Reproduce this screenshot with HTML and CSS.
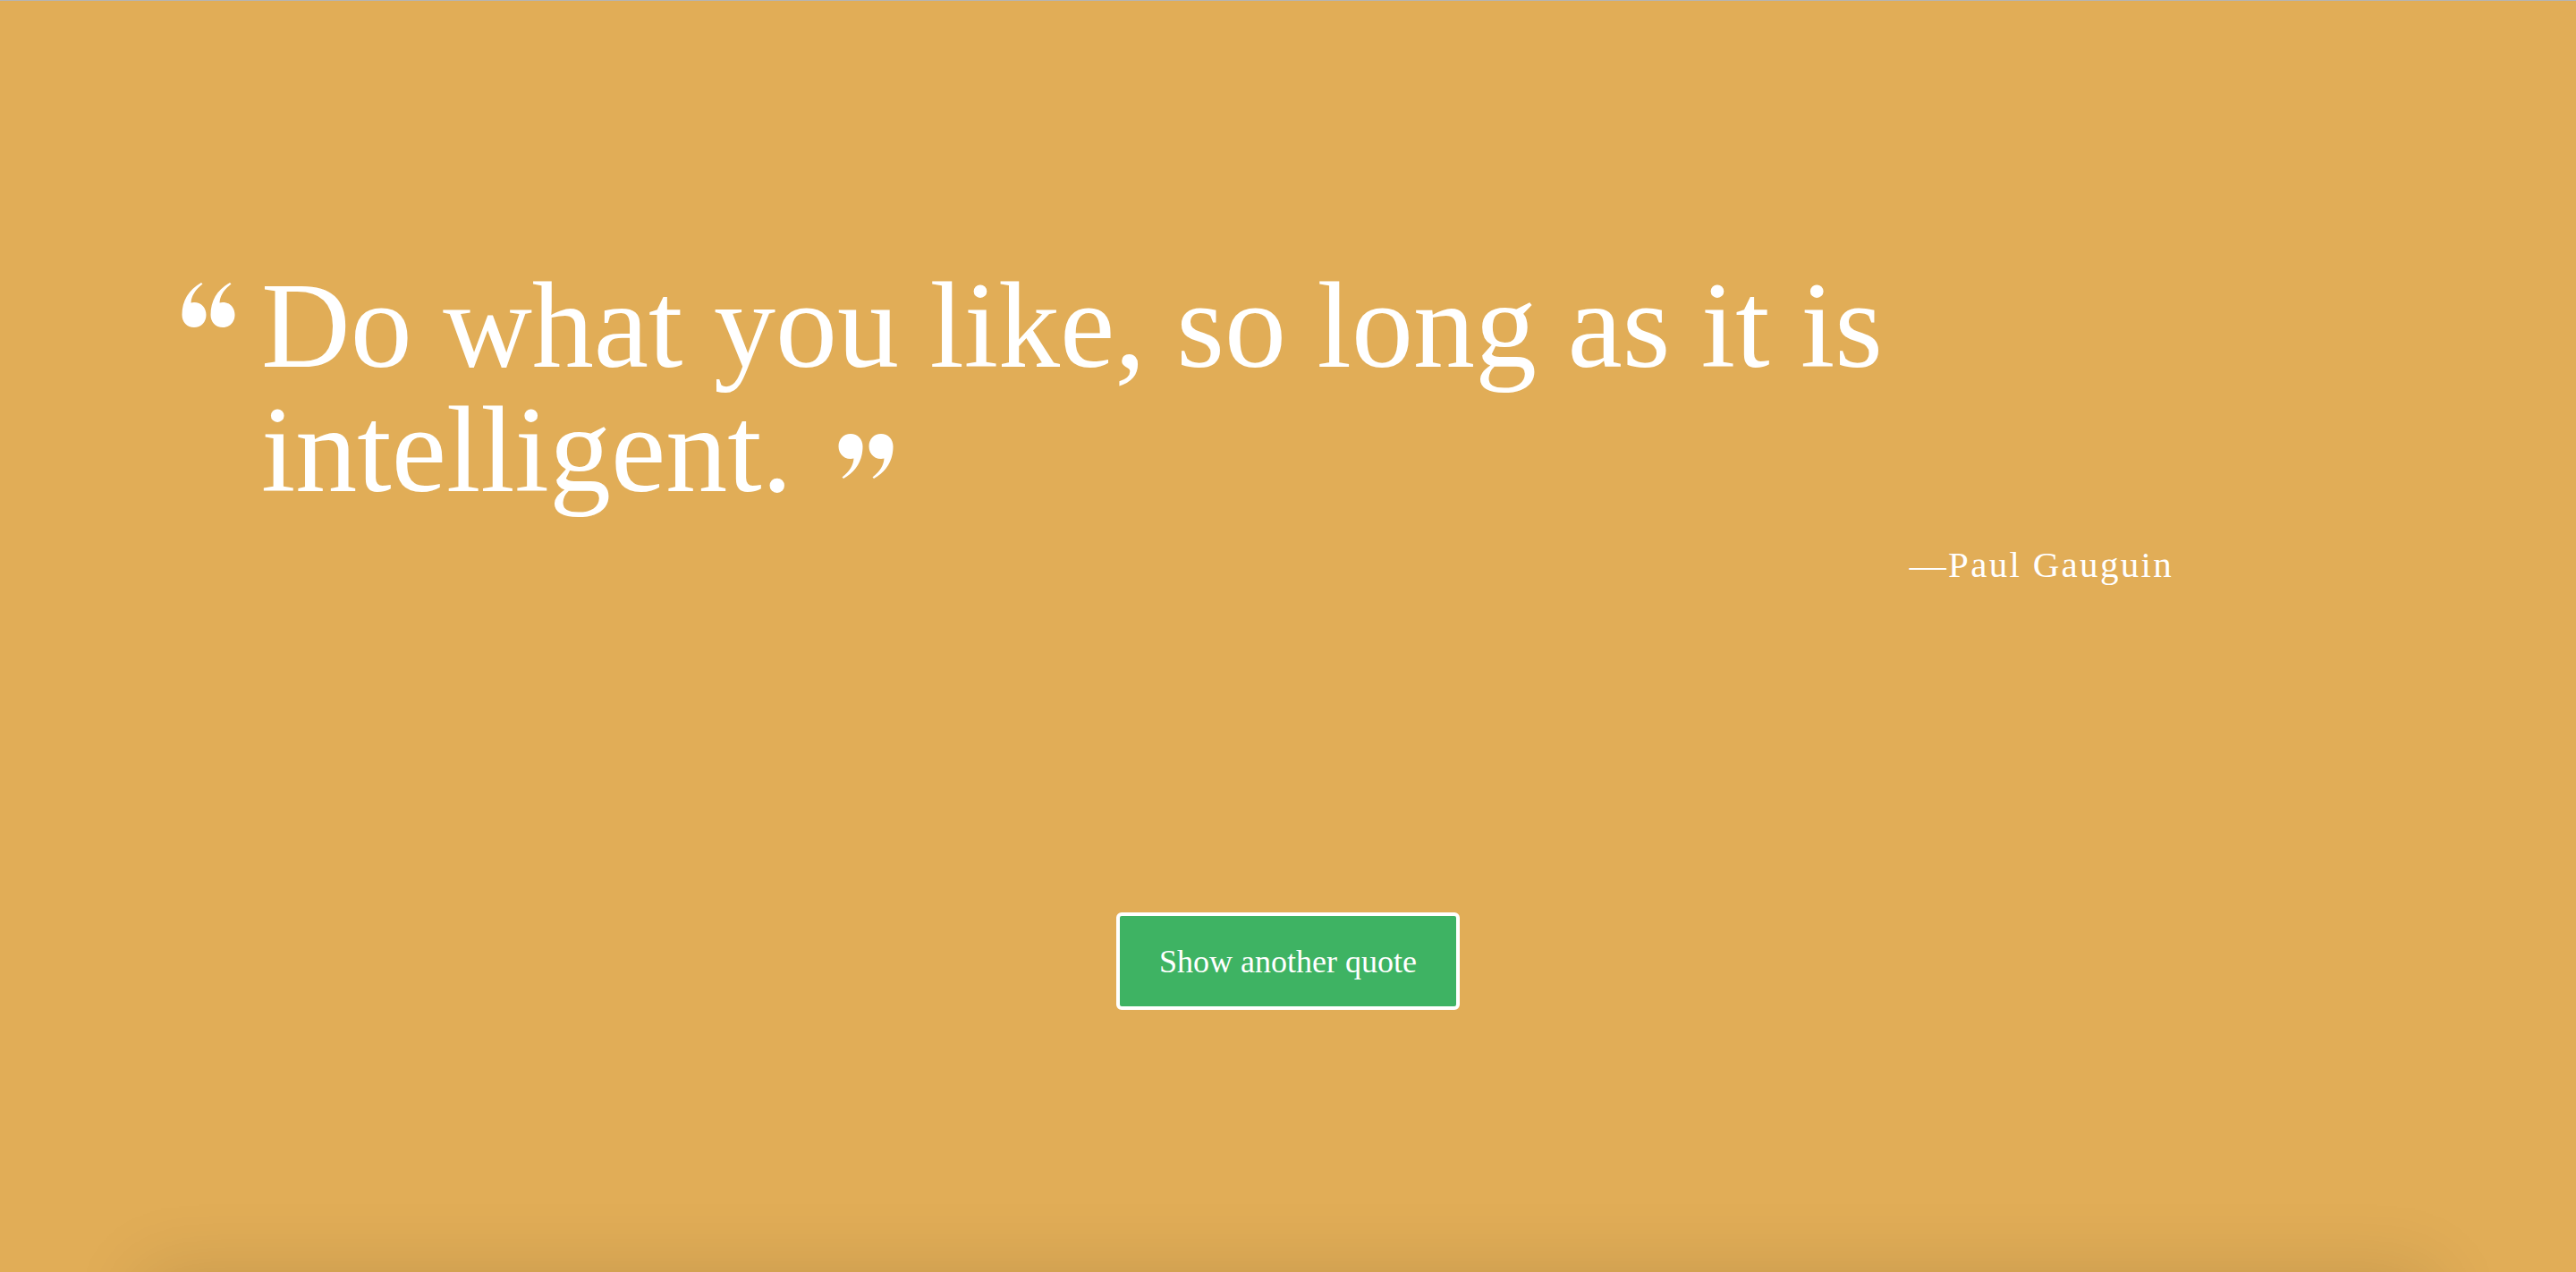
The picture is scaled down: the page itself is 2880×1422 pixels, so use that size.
FILE: index.html
```html
<!DOCTYPE html>
<html lang="en">
<head>
<meta charset="utf-8">
<title>Random Quote</title>
<link rel="stylesheet" href="styles.css">
</head>
<body>
<main class="hero">
  <section class="quote-box">
    <div class="quote-row">
      <svg class="qmark-open" viewBox="0 0 61 50" width="61" height="50" aria-hidden="true">
        <path d="M14 0 C22 0 27.5 6 27.5 14 C27.5 30 20 42 6 50 L4.5 48.5 C13 42 17 35 17.5 27.5 C16.5 27.8 15.5 28 14 28 C6 28 0.5 22 0.5 14 C0.5 6 6 0 14 0 Z" transform="rotate(180 14 25)"/>
        <path d="M14 0 C22 0 27.5 6 27.5 14 C27.5 30 20 42 6 50 L4.5 48.5 C13 42 17 35 17.5 27.5 C16.5 27.8 15.5 28 14 28 C6 28 0.5 22 0.5 14 C0.5 6 6 0 14 0 Z" transform="translate(32 0) rotate(180 14 25)"/>
      </svg>
      <p class="quote-text">Do what you like, so long as it is intelligent.&nbsp;<svg class="qmark-close" viewBox="0 0 62 50" width="62" height="50" aria-hidden="true"><path d="M14 0 C22 0 27.5 6 27.5 14 C27.5 30 20 42 6 50 L4.5 48.5 C13 42 17 35 17.5 27.5 C16.5 27.8 15.5 28 14 28 C6 28 0.5 22 0.5 14 C0.5 6 6 0 14 0 Z"/><path d="M14 0 C22 0 27.5 6 27.5 14 C27.5 30 20 42 6 50 L4.5 48.5 C13 42 17 35 17.5 27.5 C16.5 27.8 15.5 28 14 28 C6 28 0.5 22 0.5 14 C0.5 6 6 0 14 0 Z" transform="translate(34 0)"/></svg></p>
    </div>
    <p class="author">—Paul Gauguin</p>
  </section>
  <div class="actions">
    <button class="btn" type="button">Show another quote</button>
  </div>
</main>
<div class="card"></div>
</body>
</html>
```
FILE: styles.css
```css
html, body {
  margin: 0;
  padding: 0;
}

body {
  background: #e1ad57;
  font-family: "Liberation Serif", "Times New Roman", serif;
  color: #ffffff;
  overflow-x: hidden;
}

.hero {
  box-sizing: border-box;
  height: 1422px;
  border-top: 1px solid #b4b4b4;
  padding-top: 293px;
}

.quote-box {
  padding: 0 450px 0 203px;
}

.quote-row {
  display: flex;
  align-items: flex-start;
  gap: 28px;
}

.qmark-open {
  flex: none;
  fill: #ffffff;
  margin-top: 22px;
}

.quote-text {
  flex: 1;
  margin: 0;
  font-size: 138px;
  line-height: 139px;
}

.qmark-close {
  fill: #ffffff;
  vertical-align: 14px;
  margin-left: 16px;
}

.author {
  margin: 36px 0 0;
  text-align: right;
  font-size: 41px;
  line-height: 47px;
  letter-spacing: 2.3px;
}

.actions {
  display: flex;
  justify-content: center;
  margin-top: 365px;
}

.btn {
  box-sizing: border-box;
  width: 384px;
  height: 109px;
  display: flex;
  align-items: center;
  justify-content: center;
  background: #3eb363;
  color: #ffffff;
  border: 4px solid #ffffff;
  border-radius: 6px;
  font-family: "Liberation Serif", "Times New Roman", serif;
  font-size: 36px;
  padding: 0;
  cursor: pointer;
}

.card {
  width: 2560px;
  height: 400px;
  margin: 0 auto;
  background: #e1ad57;
  box-shadow: 0 0 80px rgba(0, 0, 0, 0.12);
}
```
